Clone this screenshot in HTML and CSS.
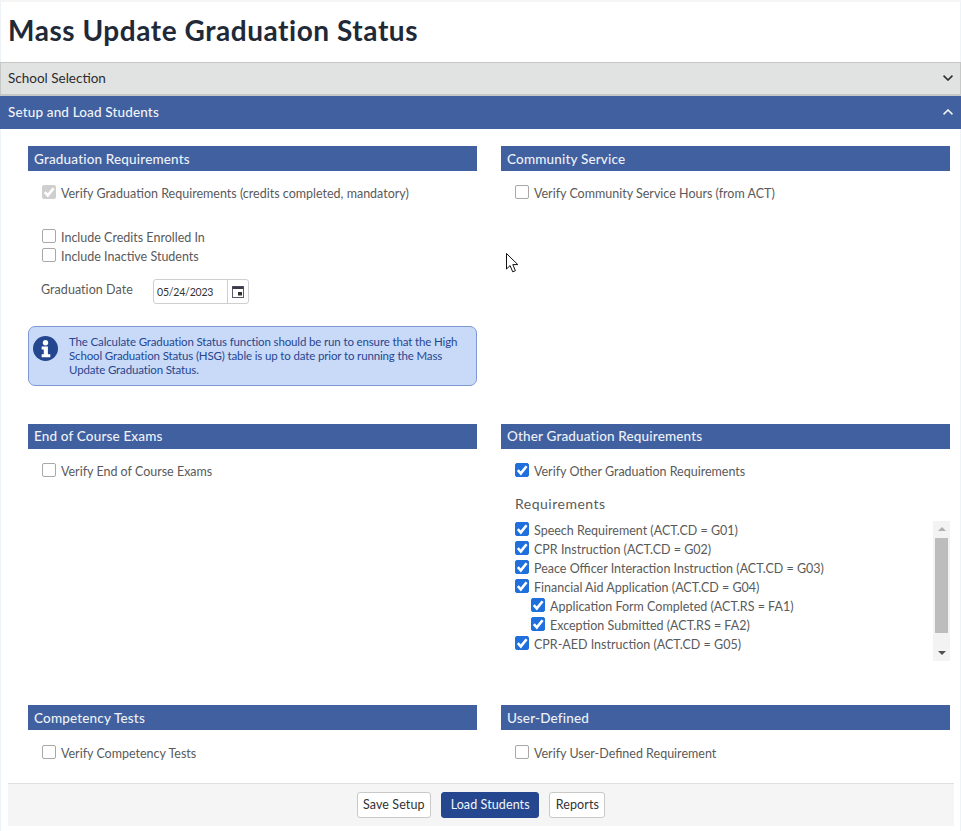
FILE: index.html
```html
<!DOCTYPE html>
<html lang="en">
<head>
<meta charset="utf-8">
<title>Mass Update Graduation Status</title>
<link rel="stylesheet" href="styles.css">
</head>
<body>
<svg class="defs" width="0" height="0"><defs><symbol id="tick" viewBox="0 0 14 14"><path d="M2.8 7.2 5.8 10.4 11.6 3.2" fill="none" stroke="currentColor" stroke-width="2.6"/></symbol></defs></svg>
<main class="page">
  <h1 class="title">Mass Update Graduation Status</h1>
  <div class="bar bar-grey"><span>School Selection</span>
    <svg class="chev" width="10" height="6" viewBox="0 0 10 6"><path d="M0.5 0.7 5 5 9.5 0.7" fill="none" stroke="currentColor" stroke-width="1.6"/></svg>
  </div>
  <div class="bar bar-blue"><span>Setup and Load Students</span>
    <svg class="chev" width="10" height="6" viewBox="0 0 10 6"><path d="M0.5 5.3 5 1 9.5 5.3" fill="none" stroke="currentColor" stroke-width="1.6"/></svg>
  </div>
  <div class="grid">
    <section class="sec sec-a">
      <h2 class="sec-head">Graduation Requirements</h2>
      <div class="row row-first"><span class="box box-disabled"><svg width="14" height="14"><use href="#tick"/></svg></span><span class="lab">Verify Graduation Requirements (credits completed, mandatory)</span></div>
      <div class="row row-gap"><span class="box"></span><span class="lab">Include Credits Enrolled In</span></div>
      <div class="row"><span class="box"></span><span class="lab">Include Inactive Students</span></div>
      <div class="date-row">
        <span class="date-label">Graduation Date</span>
        <div class="date-field"><span class="date-val">05/24/2023</span>
          <span class="date-btn"><svg width="12" height="12" viewBox="0 0 12 12"><rect x="0.5" y="0.5" width="11" height="11" fill="#fff" stroke="#5a5a6a"/><rect x="0.5" y="0.5" width="11" height="2.5" fill="#3a3a4a"/><rect x="6" y="6" width="4" height="3.5" fill="#333"/></svg></span>
        </div>
      </div>
      <div class="info">
        <svg class="info-ico" width="25" height="25" viewBox="0 0 26 26"><circle cx="13" cy="13" r="13" fill="#24468f"/><circle cx="13" cy="7" r="2.8" fill="#fff"/><path d="M9 11h6.5v8H18v3H9v-3h2.2v-5H9z" fill="#fff"/></svg>
        <p class="info-text">The Calculate Graduation Status function should be run to ensure that the High School Graduation Status (HSG) table is up to date prior to running the Mass Update Graduation Status.</p>
      </div>
    </section>
    <section class="sec sec-a">
      <h2 class="sec-head">Community Service</h2>
      <div class="row row-first"><span class="box"></span><span class="lab">Verify Community Service Hours (from ACT)</span></div>
    </section>
    <section class="sec sec-b">
      <h2 class="sec-head">End of Course Exams</h2>
      <div class="row row-first"><span class="box"></span><span class="lab">Verify End of Course Exams</span></div>
    </section>
    <section class="sec sec-b">
      <h2 class="sec-head">Other Graduation Requirements</h2>
      <div class="row row-first"><span class="box box-on"><svg width="14" height="14"><use href="#tick"/></svg></span><span class="lab">Verify Other Graduation Requirements</span></div>
      <div class="req-title">Requirements</div>
      <div class="req-wrap">
        <div class="req-list">
          <div class="row"><span class="box box-on"><svg width="14" height="14"><use href="#tick"/></svg></span><span class="lab">Speech Requirement (ACT.CD = G01)</span></div>
          <div class="row"><span class="box box-on"><svg width="14" height="14"><use href="#tick"/></svg></span><span class="lab">CPR Instruction (ACT.CD = G02)</span></div>
          <div class="row"><span class="box box-on"><svg width="14" height="14"><use href="#tick"/></svg></span><span class="lab">Peace Officer Interaction Instruction (ACT.CD = G03)</span></div>
          <div class="row"><span class="box box-on"><svg width="14" height="14"><use href="#tick"/></svg></span><span class="lab">Financial Aid Application (ACT.CD = G04)</span></div>
          <div class="row row-sub"><span class="box box-on"><svg width="14" height="14"><use href="#tick"/></svg></span><span class="lab">Application Form Completed (ACT.RS = FA1)</span></div>
          <div class="row row-sub"><span class="box box-on"><svg width="14" height="14"><use href="#tick"/></svg></span><span class="lab">Exception Submitted (ACT.RS = FA2)</span></div>
          <div class="row"><span class="box box-on"><svg width="14" height="14"><use href="#tick"/></svg></span><span class="lab">CPR-AED Instruction (ACT.CD = G05)</span></div>
        </div>
        <div class="scroll">
          <span class="arrow arrow-up"></span>
          <span class="thumb"></span>
          <span class="arrow arrow-down"></span>
        </div>
      </div>
    </section>
    <section class="sec sec-c">
      <h2 class="sec-head">Competency Tests</h2>
      <div class="row row-first"><span class="box"></span><span class="lab">Verify Competency Tests</span></div>
    </section>
    <section class="sec sec-c">
      <h2 class="sec-head">User-Defined</h2>
      <div class="row row-first"><span class="box"></span><span class="lab">Verify User-Defined Requirement</span></div>
    </section>
  </div>
  <footer class="foot">
    <button class="btn">Save Setup</button>
    <button class="btn btn-primary">Load Students</button>
    <button class="btn">Reports</button>
  </footer>
</main>
<svg class="cursor" width="13" height="21" viewBox="0 0 13 21"><path d="M.5.5v15.5l3.6-3.4 2.6 6.2 2.7-1.1-2.6-6.1h5z" fill="#fff" stroke="#111" stroke-width="1"/></svg>
</body>
</html>
```
FILE: styles.css
```css
* { box-sizing: border-box; }
html, body { margin: 0; padding: 0; }
body {
  background: #fff;
  color: #555;
  font-family: "Lato", "Liberation Sans", sans-serif;
  font-size: 12.5px;
  width: 961px;
  height: 831px;
  overflow: hidden;
  position: relative;
}
.defs { position: absolute; }
.page {
  border-top: 2px solid #f5f5f5;
  border-left: 1px solid #eef3f8;
  border-right: 1px solid #eef3f8;
  height: 831px;
}
.title {
  margin: 0;
  padding: 10px 0 0 7px;
  height: 60px;
  font-size: 28px;
  line-height: 36px;
  font-weight: 700;
  color: #1f2937;
  letter-spacing: 0.55px;
}
.bar {
  display: flex;
  justify-content: space-between;
  align-items: center;
  font-size: 13.5px;
  letter-spacing: 0.15px;
  padding: 0 8px 2px 8px;
}
.bar-grey { height: 34px; background: #e1e3e3; border: 1px solid #c6c8c8; border-bottom-width: 2px; color: #2b2b2b; padding-left: 7px; padding-right: 7px; margin-left: -1px; margin-right: -1px; letter-spacing: 0; }
.bar-blue { height: 33px; background: #4060a0; color: #f2f4f8; font-weight: 500; margin-left: -1px; margin-right: -1px; }
.chev { display: block; }
.grid {
  display: grid;
  grid-template-columns: 449px 449px;
  column-gap: 24px;
  padding: 17px 0 0 27px;
}
.sec-a { height: 278px; }
.sec-b { height: 281px; }
.sec-c { height: 78px; }
.sec-head {
  margin: 0;
  height: 25px;
  line-height: 26px;
  padding-left: 6px;
  background: #4060a0;
  color: #eef1f7;
  font-size: 13.5px;
  font-weight: 500;
  letter-spacing: 0.17px;
}
.sec-b .sec-head { line-height: 25px; }
.row {
  display: flex;
  align-items: center;
  height: 19px;
  padding-left: 14px;
}
.row-first { margin-top: 13px; }
.sec-c .row-first { margin-top: 14px; }
.row-gap { margin-top: 25px; }
.row-sub { padding-left: 30px; }
.box {
  flex: none;
  width: 14px;
  height: 14px;
  border: 1px solid #a8a8a8;
  border-radius: 2px;
  background: #fff;
  margin-right: 5px;
  position: relative;
  top: -2px;
  color: #fff;
}
.box svg { position: absolute; left: -1px; top: -1px; display: block; }
.box-on { background: #1f6fdc; border-color: #1f6fdc; }
.box-disabled { background: #cfcfcf; border-color: #cfcfcf; }
.lab { color: #5a5a5a; white-space: nowrap; }
.date-row {
  display: flex;
  align-items: flex-start;
  margin-top: 13px;
  padding-left: 13px;
}
.date-label { width: 112px; padding-top: 2px; line-height: 18px; color: #5a5a5a; letter-spacing: 0.05px; }
.date-field {
  display: flex;
  width: 96px;
  height: 25px;
  border: 1px solid #cfcfcf;
  border-radius: 3px;
  background: #fff;
}
.date-val { flex: 1; padding-left: 3px; font-size: 10.5px; line-height: 25px; color: #333; letter-spacing: -0.2px; }
.date-btn { width: 21px; border-left: 1px solid #cfcfcf; display: flex; align-items: center; justify-content: center; }
.info {
  display: flex;
  gap: 11px;
  margin-top: 22px;
  height: 60px;
  width: 449px;
  background: #c9daf9;
  border: 1px solid #7f97d3;
  border-radius: 7px;
  padding: 9px 5px 0 4px;
}
.info-ico { flex: none; }
.info-text {
  margin: -1px 0 0;
  font-size: 11.5px;
  line-height: 14px;
  color: #27468f;
  letter-spacing: -0.14px;
}
.req-title { margin: 13px 0 0 14px; height: 20px; font-size: 14px; line-height: 20px; color: #5a5a5a; letter-spacing: 0.5px; }
.req-wrap { display: flex; justify-content: space-between; margin-top: 7px; }
.scroll {
  width: 17px;
  height: 140px;
  background: #f3f3f3;
  display: flex;
  flex-direction: column;
  align-items: center;
}
.arrow { width: 0; height: 0; border-left: 4px solid transparent; border-right: 4px solid transparent; margin: 6px 0; }
.arrow-up { border-bottom: 4px solid #b0b0b0; }
.arrow-down { border-top: 4px solid #505050; margin-top: 18px; }
.thumb { width: 13px; height: 95px; background: #bdbdbd; margin-top: 1px; }
.foot {
  position: absolute;
  left: 8px;
  top: 783px;
  width: 946px;
  height: 43px;
  background: #f5f5f5;
  border-top: 1px solid #e0e0e0;
  display: flex;
  justify-content: center;
  align-items: center;
  gap: 10px;
}
.btn {
  height: 26px;
  padding: 0 5.5px 1px;
  font-family: inherit;
  font-size: 12.5px;
  letter-spacing: 0.1px;
  color: #333;
  background: #fff;
  border: 1px solid #c9c9c9;
  border-radius: 3px;
}
.btn-primary { background: #24478f; border-color: #24478f; color: #f3f5fa; padding: 0 8.5px 1px; }
.cursor { position: absolute; left: 506px; top: 253px; }
```
